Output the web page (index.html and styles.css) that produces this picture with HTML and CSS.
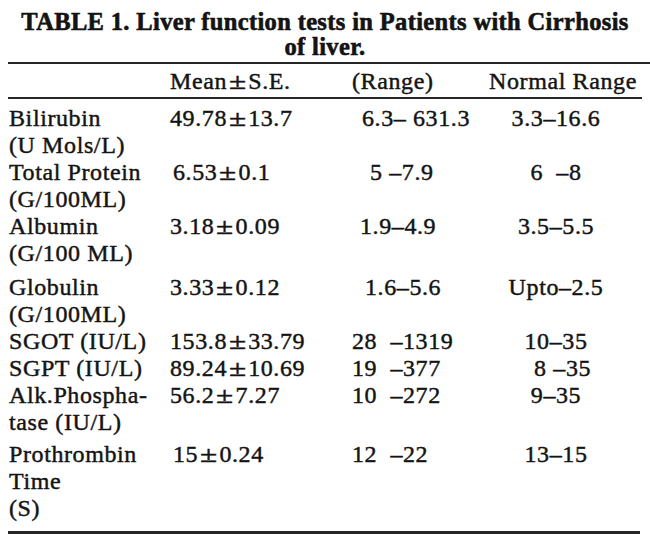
FILE: index.html
```html
<!DOCTYPE html>
<html>
<head>
<meta charset="utf-8">
<link rel="stylesheet" href="styles.css">
</head>
<body>
<div class="page">
  <h1 class="title">TABLE 1. Liver function tests in Patients with Cirrhosis<br>of liver.</h1>
  <div class="rule rule-top"></div>
  <div class="row head">
    <div class="c1"></div>
    <div class="c2">Mean<span class="pm">±</span>S.E.</div>
    <div class="c3">(Range)</div>
    <div class="c4 hd">Normal Range</div>
  </div>
  <div class="rule rule-head"></div>
  <div class="rows">
    <div class="row">
      <div class="c1">Bilirubin<br>(U Mols/L)</div>
      <div class="c2">49.78<span class="pm">±</span>13.7</div>
      <div class="c3 i10">6.3– 631.3</div>
      <div class="c4">3.3–16.6</div>
    </div>
    <div class="row">
      <div class="c1">Total Protein<br>(G/100ML)</div>
      <div class="c2 n2">6.53<span class="pm">±</span>0.1</div>
      <div class="c3 i18">5 –7.9</div>
      <div class="c4">6  –8</div>
    </div>
    <div class="row">
      <div class="c1">Albumin<br>(G/100 ML)</div>
      <div class="c2">3.18<span class="pm">±</span>0.09</div>
      <div class="c3 i8">1.9–4.9</div>
      <div class="c4">3.5–5.5</div>
    </div>
    <div class="row gap-glob">
      <div class="c1">Globulin<br>(G/100ML)</div>
      <div class="c2 n1">3.33<span class="pm">±</span>0.12</div>
      <div class="c3 i13">1.6–5.6</div>
      <div class="c4">Upto–2.5</div>
    </div>
    <div class="row">
      <div class="c1">SGOT (IU/L)</div>
      <div class="c2">153.8<span class="pm">±</span>33.79</div>
      <div class="c3">28  –1319</div>
      <div class="c4">10–35</div>
    </div>
    <div class="row">
      <div class="c1">SGPT (IU/L)</div>
      <div class="c2">89.24<span class="pm">±</span>10.69</div>
      <div class="c3">19  –377</div>
      <div class="c4">  8 –35</div>
    </div>
    <div class="row">
      <div class="c1">Alk.Phospha-<br>tase (IU/L)</div>
      <div class="c2">56.2<span class="pm">±</span>7.27</div>
      <div class="c3">10  –272</div>
      <div class="c4">9–35</div>
    </div>
    <div class="row gap-pro">
      <div class="c1">Prothrombin<br>Time<br>(S)</div>
      <div class="c2 n2">15<span class="pm">±</span>0.24</div>
      <div class="c3">12  –22</div>
      <div class="c4">13–15</div>
    </div>
  </div>
  <div class="rule rule-bottom"></div>
</div>
</body>
</html>
```

FILE: styles.css
```css
html, body {
  margin: 0;
  padding: 0;
  background: #ffffff;
}

.page {
  width: 650px;
  height: 552px;
  overflow: hidden;
  font-family: "Liberation Serif", "Times New Roman", serif;
  color: #141414;
  -webkit-text-stroke: 0.45px #141414;
}

.title {
  margin: 0;
  padding-top: 9px;
  font-size: 24.5px;
  font-weight: bold;
  letter-spacing: 0.35px;
  line-height: 25px;
  text-align: center;
  -webkit-text-stroke: 0.6px #111;
}

.rule {
  background: #262626;
  margin-left: 8px;
}

.rule-top {
  height: 2px;
  margin-top: 3px;
}

.rule-head {
  height: 2px;
  width: 634px;
  margin-top: 2px;
}

.rule-bottom {
  height: 3px;
  width: 632px;
  margin-top: 9px;
}

.row {
  display: grid;
  grid-template-columns: 161px 182px 118px 172px;
  padding-left: 9px;
  font-size: 24px;
  line-height: 27px;
  letter-spacing: 0.6px;
  white-space: pre;
}

.pm {
  display: inline-block;
  font-size: 24px;
  letter-spacing: 0;
  margin: 0 4px;
  transform: scaleX(1.3);
}

.head {
  margin-top: 4px;
}

.rows {
  margin-top: 6px;
}

.gap-glob {
  margin-top: 7px;
}

.gap-pro {
  margin-top: 5px;
}

.c4 {
  text-align: center;
}

.hd {
  padding-left: 14px;
}

.n1 {
  padding-left: 0;
}

.n2 {
  padding-left: 3px;
}

.i8 {
  padding-left: 8px;
}

.i10 {
  padding-left: 10px;
}

.i13 {
  padding-left: 13px;
}

.i18 {
  padding-left: 18px;
}
```
